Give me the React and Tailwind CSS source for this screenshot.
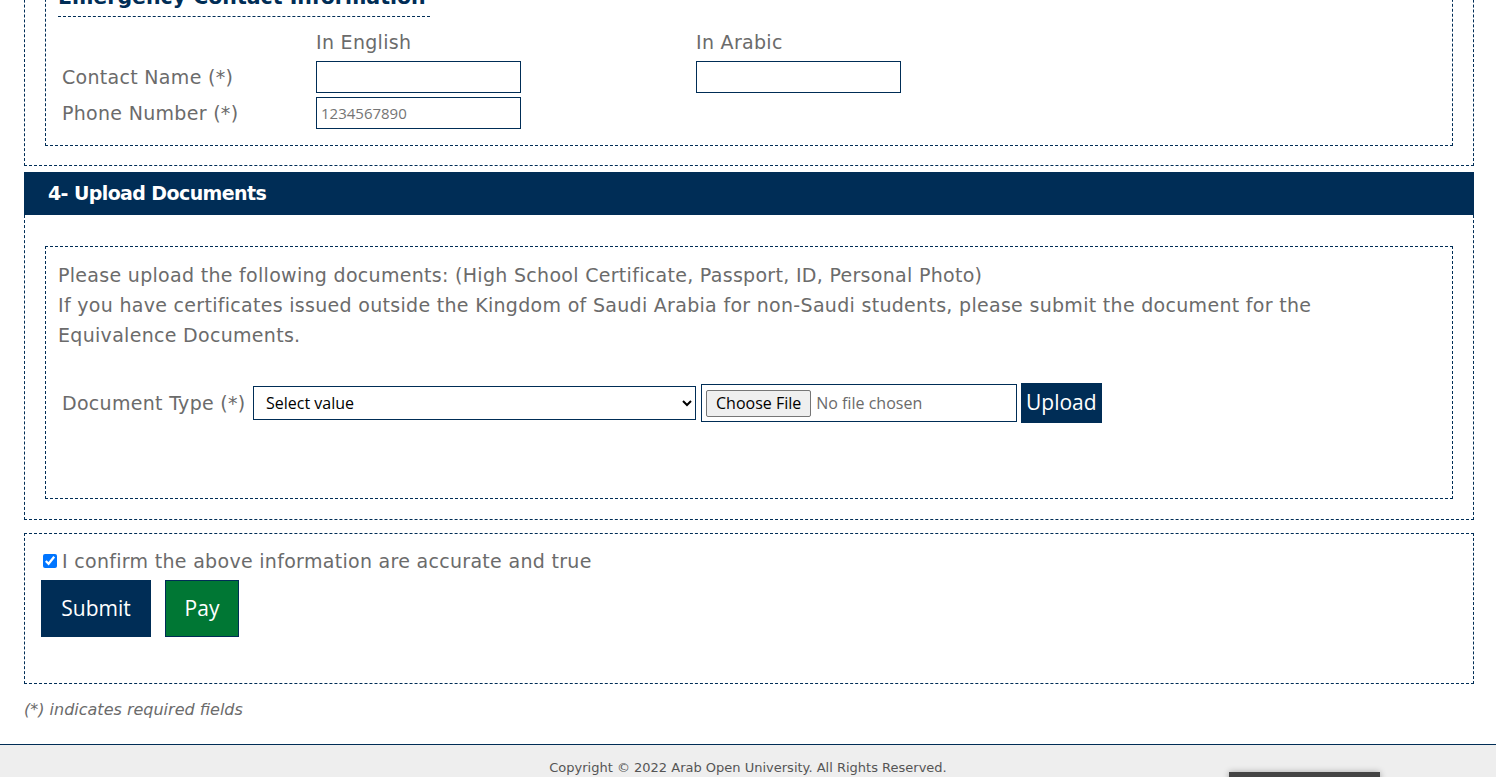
export default function App() {
  const font = { fontFamily: '"DejaVu Sans", "Open Sans", sans-serif' };
  const ui = { fontFamily: '"Open Sans", "Noto Sans", sans-serif' };
  return (
    <div className="min-h-screen bg-white text-[#6b6b6b]" style={font}>
      <div className="pl-6 pr-[22px]">
        {/* 3- Emergency contact (scrolled, top cut off) */}
        <div className="-mt-[40px] border border-dashed border-[#002d56] px-5 pb-[19px] pt-2">
          <div className="border border-dashed border-[#002d56] pb-4 pl-3 pt-2">
            <h3 className="inline-block border-b border-dashed border-[#002d56] pr-1 text-[20.5px] font-semibold leading-[38px] text-[#002d56]">
              Emergency Contact Information
            </h3>
            <div className="mt-[11px] grid grid-cols-[254px_380px_1fr] items-center gap-y-1 pl-1 text-[19px] tracking-[0.3px]">
              <div />
              <div className="h-[29px] leading-[29px]">In English</div>
              <div className="h-[29px] leading-[29px]">In Arabic</div>
              <div>Contact Name (*)</div>
              <div>
                <input className="h-[32px] w-[205px] border border-[#002d56] bg-white px-1 text-[15px]" style={ui} />
              </div>
              <div>
                <input className="h-[32px] w-[205px] border border-[#002d56] bg-white px-1 text-[15px]" style={ui} />
              </div>
              <div>Phone Number (*)</div>
              <div>
                <input
                  placeholder="1234567890"
                  style={ui}
                  className="h-[32px] w-[205px] border border-[#002d56] bg-white px-1 text-[15px] tracking-normal placeholder:text-[#757575]"
                />
              </div>
              <div />
            </div>
          </div>
        </div>

        {/* 4- Upload Documents */}
        <div className="mt-[6px] flex h-[43px] items-center bg-[#002d56] pl-6 text-[19px] font-bold tracking-[-0.6px] text-white">
          4- Upload Documents
        </div>
        <div className="border border-t-0 border-dashed border-[#002d56] px-5 pb-5 pt-[31px]">
          <div className="h-[253px] border border-dashed border-[#002d56] pl-3 pr-[120px] pt-[13px]">
            <p className="text-[19px] leading-[30px] tracking-[0.3px]">
              Please upload the following documents: (High School Certificate, Passport, ID, Personal Photo)
              <br />
              If you have certificates issued outside the Kingdom of Saudi Arabia for non-Saudi students, please submit the document for the Equivalence Documents.
            </p>
            <div className="mt-[33px] flex items-center pl-1" style={ui}>
              <span className="w-[191px] shrink-0 text-[19px] tracking-[0.3px]" style={font}>
                Document Type (*)
              </span>
              <select className="h-[34px] w-[443px] border border-[#002d56] bg-white pl-[8px] pr-1 text-[16px] text-black">
                <option>Select value</option>
              </select>
              <div className="ml-[5px] flex h-[38px] w-[316px] items-center border border-[#002d56] pl-[4px]">
                <span className="flex h-[27px] items-center rounded-[2px] border border-[#767676] bg-[#efefef] px-[9px] text-[16px] text-black">
                  Choose File
                </span>
                <span className="ml-[5px] text-[16px] text-[#6b6b6b]">No file chosen</span>
              </div>
              <button className="ml-[4px] h-[40px] bg-[#002d56] px-[5px] text-[21px] text-white">Upload</button>
            </div>
          </div>
        </div>

        {/* confirmation */}
        <div className="mt-[13px] h-[151px] border border-dashed border-[#002d56] pl-4 pt-[17px]">
          <label className="flex items-center text-[19px] leading-[20px] tracking-[0.3px]">
            <input type="checkbox" defaultChecked className="ml-[2px] mr-[5px] h-[14px] w-[14px] accent-[#0075ff]" />
            I confirm the above information are accurate and true
          </label>
          <div className="mt-[9px] flex gap-[14px]" style={ui}>
            <button className="h-[57px] w-[110px] bg-[#002d56] text-[21px] text-white">Submit</button>
            <button className="h-[57px] w-[74px] border border-[#002d56] bg-[#007734] text-[21px] text-white">Pay</button>
          </div>
        </div>

        <p className="mt-[15px] text-[16px] italic leading-[22px] text-[#6b6b6b]">(*) indicates required fields</p>
      </div>

      {/* footer */}
      <footer className="relative mt-[23px] h-[40px] border-t border-[#002d56] bg-[#eeeeee]">
        <p className="pt-[14px] text-center text-[13px] leading-[18px] text-[#555]">
          Copyright © 2022 Arab Open University. All Rights Reserved.
        </p>
        <div className="absolute left-[1229px] top-[27px] h-[20px] w-[151px] bg-[#444] shadow-[0_0_6px_rgba(0,0,0,0.3)]" />
      </footer>
    </div>
  );
}
